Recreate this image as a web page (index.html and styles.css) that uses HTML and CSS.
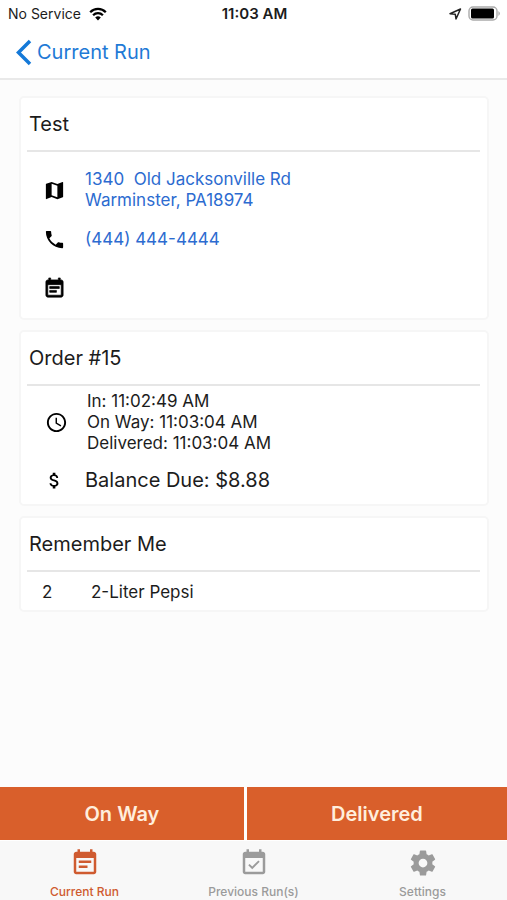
FILE: index.html
```html
<!DOCTYPE html>
<html lang="en">
<head>
<meta charset="utf-8">
<meta name="viewport" content="width=device-width, initial-scale=1">
<title>Current Run</title>
<link rel="stylesheet" href="styles.css">
</head>
<body>
<div class="status">
  <div class="carrier">No Service
    <svg width="18" height="14" viewBox="0 0 18 14" aria-hidden="true"><g fill="none" stroke="#000" stroke-width="2.3"><path d="M1.2 5.2a11 11 0 0 1 15.6 0"/><path d="M4.1 8.2a7 7 0 0 1 9.8 0"/></g><path d="M9 13.4l-2.8-2.9a4 4 0 0 1 5.6 0z"/></svg>
  </div>
  <div class="time">11:03 AM</div>
  <div class="power">
    <svg width="14" height="14" viewBox="0 0 14 14" aria-hidden="true"><path d="M12.500 2L8 12 7.300 7.300 2 6.700z" fill="none" stroke="#222" stroke-width="1.5" stroke-linejoin="round"/></svg>
    <svg width="33" height="16" viewBox="0 0 33 16" aria-hidden="true"><rect x="1" y="1" width="28" height="13" rx="4" fill="#fff" stroke="#aaa" stroke-width="1.400"/><rect x="3" y="2.500" width="23" height="10" rx="1.500"/><path d="M30.500 5q2.500 2.500 0 5z" fill="#999"/></svg>
  </div>
</div>
<header class="nav">
  <a class="back" href="#">
    <svg width="17" height="27" viewBox="0 0 17 27" aria-hidden="true"><path d="M15 2L3.500 13.500 15 25" fill="none" stroke="#1479d8" stroke-width="3.500"/></svg>
    <span>Current Run</span>
  </a>
</header>
<main class="content">
  <section class="card">
    <h2 class="title">Test</h2>
    <div class="contact">
      <div class="row">
        <svg class="icon" viewBox="0 0 24 24" aria-hidden="true"><path d="M20.500 3l-.16.03L15 5.100 9 3 3.360 4.900c-.21.07-.36.25-.36.48V20.500c0 .28.22.5.5.5l.16-.03L9 18.900l6 2.100 5.640-1.900c.21-.07.36-.25.36-.48V3.500c0-.28-.22-.5-.5-.5zM15 19l-6-2.110V5l6 2.110V19z"/></svg>
        <a class="link" href="#">1340&nbsp; Old Jacksonville Rd<br>Warminster, PA18974</a>
      </div>
      <div class="row">
        <svg class="icon" viewBox="0 0 24 24" aria-hidden="true"><path d="M6.620 10.790c1.440 2.830 3.760 5.140 6.590 6.590l2.200-2.200c.27-.27.67-.36 1.020-.24 1.120.37 2.330.57 3.570.57.55 0 1 .45 1 1V20c0 .55-.45 1-1 1-9.390 0-17-7.610-17-17 0-.55.45-1 1-1h3.500c.55 0 1 .45 1 1 0 1.250.2 2.450.57 3.570.11.35.03.74-.25 1.020l-2.200 2.200z"/></svg>
        <a class="link" href="#">(444) 444-4444</a>
      </div>
      <div class="row">
        <svg class="icon" viewBox="0 0 24 24" aria-hidden="true"><path d="M17 10H7v2h10v-2zm2-7h-1V1h-2v2H8V1H6v2H5c-1.110 0-1.990.9-1.990 2L3 19c0 1.100.89 2 2 2h14c1.100 0 2-.9 2-2V5c0-1.100-.9-2-2-2zm0 16H5V8h14v11zm-5-5H7v2h7v-2z" stroke="#000" stroke-width=".7"/></svg>
      </div>
    </div>
  </section>
  <section class="card">
    <h2 class="title">Order #15</h2>
    <div class="times">
      <svg class="icon" viewBox="0 0 24 24" aria-hidden="true"><path d="M11.990 2C6.470 2 2 6.480 2 12s4.470 10 9.990 10C17.520 22 22 17.520 22 12S17.520 2 11.990 2zM12 20c-4.420 0-8-3.580-8-8s3.580-8 8-8 8 3.580 8 8-3.580 8-8 8zm.5-13H11v6l5.250 3.150.75-1.230-4.500-2.670z"/></svg>
      <div>In: 11:02:49 AM<br>On Way: 11:03:04 AM<br>Delivered: 11:03:04 AM</div>
    </div>
    <div class="balance">
      <svg class="icon" viewBox="0 0 24 24" aria-hidden="true"><path d="M11.800 10.900c-2.270-.59-3-1.200-3-2.150 0-1.090 1.010-1.850 2.700-1.850 1.780 0 2.440.85 2.500 2.100h2.210c-.07-1.720-1.120-3.300-3.210-3.810V3h-3v2.160c-1.940.42-3.500 1.680-3.500 3.610 0 2.310 1.910 3.460 4.700 4.130 2.500.6 3 1.480 3 2.410 0 .69-.49 1.790-2.700 1.790-2.060 0-2.870-.92-2.980-2.100h-2.200c.12 2.190 1.760 3.420 3.680 3.830V21h3v-2.150c1.950-.37 3.500-1.500 3.500-3.550 0-2.840-2.430-3.810-4.700-4.400z"/></svg>
      <span>Balance Due: $8.88</span>
    </div>
  </section>
  <section class="card">
    <h2 class="title">Remember Me</h2>
    <div class="item"><span class="qty">2</span><span>2-Liter Pepsi</span></div>
  </section>
</main>
<div class="actions">
  <button class="action" type="button">On Way</button>
  <button class="action" type="button">Delivered</button>
</div>
<nav class="tabs">
  <a class="tab active" href="#">
    <svg class="tab-icon" viewBox="0 0 24 24" aria-hidden="true"><path d="M17 10H7v2h10v-2zm2-7h-1V1h-2v2H8V1H6v2H5c-1.110 0-1.990.9-1.990 2L3 19c0 1.100.89 2 2 2h14c1.100 0 2-.9 2-2V5c0-1.100-.9-2-2-2zm0 16H5V8h14v11zm-5-5H7v2h7v-2z"/></svg>
    <span>Current Run</span>
  </a>
  <a class="tab" href="#">
    <svg class="tab-icon" viewBox="0 0 24 24" aria-hidden="true"><path d="M16.530 11.060L15.470 10l-4.880 4.880-2.120-2.120-1.060 1.060L10.590 17l5.940-5.940zM19 3h-1V1h-2v2H8V1H6v2H5c-1.110 0-1.990.9-1.990 2L3 19c0 1.100.89 2 2 2h14c1.100 0 2-.9 2-2V5c0-1.100-.9-2-2-2zm0 16H5V8h14v11z"/></svg>
    <span>Previous Run(s)</span>
  </a>
  <a class="tab" href="#">
    <svg class="tab-icon" viewBox="0 0 24 24" aria-hidden="true"><path d="M19.430 12.980c.04-.32.07-.64.07-.98s-.03-.66-.07-.98l2.110-1.650c.19-.15.24-.42.12-.64l-2-3.460c-.12-.22-.39-.3-.61-.22l-2.490 1c-.52-.4-1.080-.73-1.690-.98l-.38-2.650C14.460 2.180 14.250 2 14 2h-4c-.25 0-.46.18-.49.42l-.38 2.650c-.61.25-1.170.59-1.690.98l-2.490-1c-.23-.09-.49 0-.61.22l-2 3.460c-.13.22-.07.49.12.64l2.110 1.650c-.04.32-.07.65-.07.98s.03.66.07.98l-2.110 1.650c-.19.15-.24.42-.12.64l2 3.460c.12.22.39.3.61.22l2.490-1c.52.4 1.080.73 1.690.98l.38 2.650c.03.24.24.42.49.42h4c.25 0 .46-.18.49-.42l.38-2.650c.61-.25 1.170-.59 1.690-.98l2.490 1c.23.09.49 0 .61-.22l2-3.460c.12-.22.07-.49-.12-.64l-2.110-1.650zM12 15.500c-1.930 0-3.500-1.570-3.500-3.500s1.570-3.500 3.500-3.500 3.500 1.570 3.500 3.500-1.570 3.500-3.500 3.500z"/></svg>
    <span>Settings</span>
  </a>
</nav>
</body>
</html>
```
FILE: styles.css
```css
* { box-sizing: border-box; }
body {
  margin: 0;
  min-height: 100vh;
  display: flex;
  flex-direction: column;
  background: #fcfcfc;
  color: #1c1c1c;
  font-family: Inter, "Liberation Sans", sans-serif;
  font-size: 17px;
  line-height: 21px;
}
a { text-decoration: none; }
svg { display: block; flex: none; }
.status {
  display: grid;
  grid-template-columns: 1fr auto 1fr;
  align-items: center;
  height: 27px;
  padding: 0 6px 0 8px;
  background: #fff;
  font-size: 14px;
}
.carrier { display: flex; align-items: center; gap: 8px; }
.time { font-size: 15px; font-weight: 600; }
.power { display: flex; align-items: center; justify-content: flex-end; gap: 6px; }
.nav {
  display: flex;
  align-items: center;
  height: 53px;
  padding: 0 15px;
  background: #fff;
  border-bottom: 2px solid #e9e9e9;
}
.back {
  display: flex;
  align-items: center;
  gap: 5px;
  color: #1f7ad6;
  font-size: 20px;
}
.content {
  flex: 1;
  display: flex;
  flex-direction: column;
  gap: 10px;
  padding: 16px 18px 16px 19px;
}
.card {
  padding: 0 7px 0 6px;
  background: #fff;
  border: 2px solid #f6f6f6;
  border-radius: 5px;
}
.title {
  margin: 0;
  padding: 15px 2px;
  border-bottom: 2px solid #e6e6e6;
  font-size: 20px;
  font-weight: 400;
  line-height: 22px;
}
.contact { display: flex; flex-direction: column; gap: 5px; padding: 16px 0 8px 16px; }
.row { display: flex; align-items: center; gap: 19px; min-height: 44px; }
.icon { width: 23px; height: 23px; fill: #000; }
.link { color: #2c6bd0; }
.times { display: flex; align-items: center; gap: 19px; padding: 5px 0 0 18px; }
.balance {
  display: flex;
  align-items: center;
  gap: 20px;
  padding: 16px 0 13px 17px;
  font-size: 20px;
}
.balance .icon { width: 21px; height: 21px; }
.item { display: flex; padding: 10px 0 7px 15px; }
.qty { width: 49px; }
.actions {
  display: grid;
  grid-template-columns: 15fr 16fr;
  gap: 3px;
  padding-bottom: 1px;
  background: #fff;
}
.action {
  height: 53px;
  padding: 0;
  border: 0;
  background: #d95f2b;
  color: #ffeedd;
  font: 600 20px/24px Inter, "Liberation Sans", sans-serif;
}
.tabs { display: flex; height: 59px; background: #f8f8f8; }
.tab {
  flex: 1;
  display: flex;
  flex-direction: column;
  align-items: center;
  gap: 6px;
  padding-top: 7px;
  color: #9b9b9b;
  font-size: 12px;
  font-weight: 500;
  line-height: 16px;
}
.tab-icon { width: 30px; height: 30px; fill: currentColor; }
.active { color: #cf5b30; }
```
